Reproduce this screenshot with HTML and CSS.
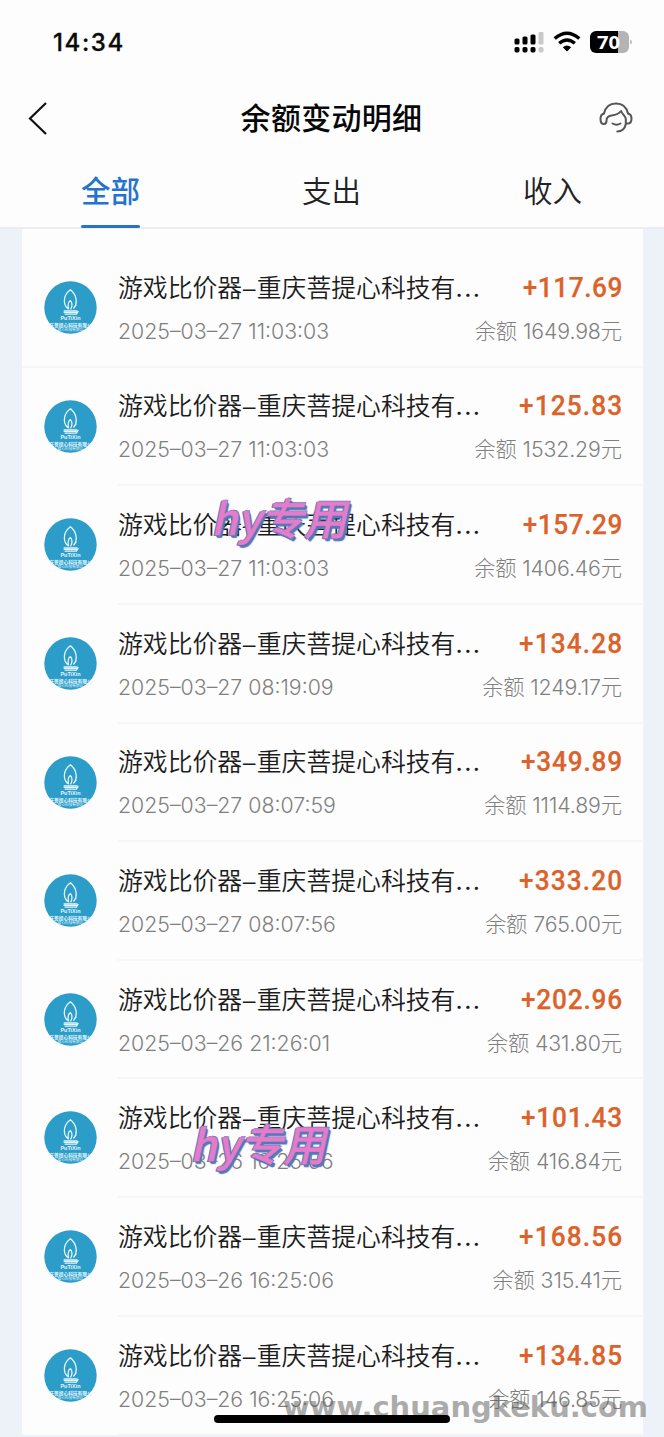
FILE: index.html
```html
<!DOCTYPE html>
<html lang="zh-CN">
<head>
<meta charset="utf-8">
<title>余额变动明细</title>
<link rel="stylesheet" href="styles.css">
</head>
<body>
<svg class="defs" width="0" height="0">
  <symbol id="avatar" viewBox="0 0 54 54">
    <circle cx="27" cy="27" r="26.7" fill="#2c9cc9"/>
    <g fill="none" stroke="#e6f7fc" stroke-width="1.3">
      <path d="M24 28C18 22 21 13 27 9c6 5 8 13 3 19M25 29c-1-5 0-8 2-9 2 2 2 6 0 9M30 28l3-4"/>
      <path d="M20 30.500h14M20 32h14M21 33.700h12l2-3"/>
    </g>
    <text x="27" y="40" text-anchor="middle" class="logo-name">PuTiXin</text>
    <text x="27" y="46.600" text-anchor="middle" class="logo-cn">庆菩提心科技有限公</text>
    <text x="27" y="50.700" text-anchor="middle" class="logo-sub">提心科技有限公</text>
  </symbol>
</svg>
<div class="screen">
  <header class="status">
    <span class="time">14:34</span>
    <svg class="status-icons" width="120" height="24" viewBox="0 0 120 24">
      <g fill="#000">
        <rect x="2.500" y="8.500" width="5" height="6" rx="1.500"/><rect x="10.500" y="6.500" width="5" height="8" rx="1.500"/><rect x="18.500" y="4.500" width="5" height="10" rx="1.500"/>
        <rect x="2.500" y="17" width="5" height="5.500" rx="1.700"/><rect x="10.500" y="17" width="5" height="5.500" rx="1.700"/><rect x="18.500" y="17" width="5" height="5.500" rx="1.700"/>
      </g>
      <g fill="#c9c9c9"><rect x="26.500" y="2" width="5" height="12.500" rx="1"/><rect x="26.500" y="17" width="5" height="5.500" rx="1.700"/></g>
      <g fill="none" stroke="#000" stroke-width="3.400"><path d="M42.700 8.500Q55 -2 67.300 8.500"/><path d="M47.200 13.300Q55 6.500 62.800 13.300"/></g>
      <path d="M50.800 17.200Q55 13.600 59.200 17.200L55 21.500Z"/>
      <path d="M84 1h22v22H84a6 6 0 0 1-6-6V7a6 6 0 0 1 6-6Z"/>
      <path d="M106 1h5a6 6 0 0 1 6 6v10a6 6 0 0 1-6 6h-5Z" fill="#b4b4b4"/>
      <path d="M118.300 9.500q1.500.5 1.500 2.500t-1.500 2.500Z" fill="#aaa"/>
      <text x="96.500" y="18.500" text-anchor="middle" class="battery" textLength="23" lengthAdjust="spacingAndGlyphs">70</text>
    </svg>
  </header>
  <nav class="navbar">
    <svg class="back" width="36" height="36" viewBox="0 0 36 36"><path d="M20 3 4 18.500 20 34" fill="none" stroke="#111" stroke-width="2.200"/></svg>
    <h1>余额变动明细</h1>
    <svg class="service" width="36" height="34" viewBox="0 0 36 34" fill="none" stroke="#555" stroke-width="2" stroke-linecap="round" stroke-linejoin="round">
      <path d="M6 12.500C7.500 6 12 2.500 18 2.500S28.500 6 30 12.500"/>
      <path d="M6 12.500C3.500 13 2.500 15 2.500 18c0 3 1 5 3.300 5S8.500 21.500 8.500 19.500c0-3 2-4.500 5-5 4-.5 7-1 9.500-4.500 1 3 4 4.500 4.800 7.500V23c-1 5-4 7.500-8.500 7.500"/>
      <path d="M30 12.500c2.500.5 3.500 2.500 3.500 5s-1 5-3.500 5H28M14.500 22.500q4 2.500 8 0"/>
    </svg>
  </nav>
  <div class="tabs"><span class="tab active">全部</span><span class="tab">支出</span><span class="tab">收入</span></div>
  <main class="list">
    <article class="row"><svg class="avatar"><use href="#avatar"/></svg><div class="body"><div class="line"><span class="title">游戏比价器<i>–</i>重庆菩提心科技有<b>...</b></span><span class="amount narrow"><i>+</i>117.69</span></div><div class="line sub"><time>2025–03–27 11:03:03</time><span class="balance">余额 1649.98元</span></div></div></article>
    <article class="row"><svg class="avatar"><use href="#avatar"/></svg><div class="body"><div class="line"><span class="title">游戏比价器<i>–</i>重庆菩提心科技有<b>...</b></span><span class="amount"><i>+</i>125.83</span></div><div class="line sub"><time>2025–03–27 11:03:03</time><span class="balance">余额 1532.29元</span></div></div></article>
    <article class="row"><svg class="avatar"><use href="#avatar"/></svg><div class="body"><div class="line"><span class="title">游戏比价器<i>–</i>重庆菩提心科技有<b>...</b></span><span class="amount narrow"><i>+</i>157.29</span></div><div class="line sub"><time>2025–03–27 11:03:03</time><span class="balance">余额 1406.46元</span></div></div></article>
    <article class="row"><svg class="avatar"><use href="#avatar"/></svg><div class="body"><div class="line"><span class="title">游戏比价器<i>–</i>重庆菩提心科技有<b>...</b></span><span class="amount"><i>+</i>134.28</span></div><div class="line sub"><time>2025–03–27 08:19:09</time><span class="balance">余额 1249.17元</span></div></div></article>
    <article class="row"><svg class="avatar"><use href="#avatar"/></svg><div class="body"><div class="line"><span class="title">游戏比价器<i>–</i>重庆菩提心科技有<b>...</b></span><span class="amount medium"><i>+</i>349.89</span></div><div class="line sub"><time>2025–03–27 08:07:59</time><span class="balance">余额 1114.89元</span></div></div></article>
    <article class="row"><svg class="avatar"><use href="#avatar"/></svg><div class="body"><div class="line"><span class="title">游戏比价器<i>–</i>重庆菩提心科技有<b>...</b></span><span class="amount"><i>+</i>333.20</span></div><div class="line sub"><time>2025–03–27 08:07:56</time><span class="balance">余额 765.00元</span></div></div></article>
    <article class="row"><svg class="avatar"><use href="#avatar"/></svg><div class="body"><div class="line"><span class="title">游戏比价器<i>–</i>重庆菩提心科技有<b>...</b></span><span class="amount medium"><i>+</i>202.96</span></div><div class="line sub"><time>2025–03–26 21:26:01</time><span class="balance">余额 431.80元</span></div></div></article>
    <article class="row"><svg class="avatar"><use href="#avatar"/></svg><div class="body"><div class="line"><span class="title">游戏比价器<i>–</i>重庆菩提心科技有<b>...</b></span><span class="amount medium"><i>+</i>101.43</span></div><div class="line sub"><time>2025–03–26 16:25:56</time><span class="balance">余额 416.84元</span></div></div></article>
    <article class="row"><svg class="avatar"><use href="#avatar"/></svg><div class="body"><div class="line"><span class="title">游戏比价器<i>–</i>重庆菩提心科技有<b>...</b></span><span class="amount"><i>+</i>168.56</span></div><div class="line sub"><time>2025–03–26 16:25:06</time><span class="balance">余额 315.41元</span></div></div></article>
    <article class="row"><svg class="avatar"><use href="#avatar"/></svg><div class="body"><div class="line"><span class="title">游戏比价器<i>–</i>重庆菩提心科技有<b>...</b></span><span class="amount"><i>+</i>134.85</span></div><div class="line sub"><time>2025–03–26 16:25:06</time><span class="balance">余额 146.85元</span></div></div></article>
  </main>
  <span class="stamp stamp-a">hy专用</span>
  <span class="stamp stamp-b">hy专用</span>
  <svg class="site" width="380" height="50"><text x="8" y="32" textLength="365" lengthAdjust="spacingAndGlyphs">www.chuangkeku.com</text></svg>
  <div class="home"></div>
</div>
</body>
</html>
```
FILE: styles.css
```css
* { box-sizing: border-box; }
body { margin: 0; font-family: Inter, "Noto Sans CJK SC", sans-serif; }
.defs { position: absolute; }
.screen { position: relative; width: 664px; height: 1437px; overflow: hidden; background: #edf2f8; display: flex; flex-direction: column; }
.status { height: 80px; flex: none; background: #fdfdfd; padding: 30px 32px 0 53px; display: flex; justify-content: space-between; align-items: flex-start; }
.time { font-size: 24px; line-height: 25px; font-weight: 500; letter-spacing: 1.600px; color: #0a0a0a; -webkit-text-stroke: .3px #0a0a0a; }
.battery { font: 700 18px "Open Sans", sans-serif; fill: #fff; }
.navbar { height: 76px; flex: none; background: #fdfdfd; padding: 0 30px 0 26px; display: flex; justify-content: space-between; align-items: center; }
.navbar h1 { margin: 0; padding: 0 0 4px 3px; font: 500 30px/40px "Noto Sans CJK SC", sans-serif; letter-spacing: .3px; color: #080808; }
.tabs { height: 73px; flex: none; background: #fdfdfd; display: grid; grid-template-columns: repeat(3, 221px); border-bottom: 2px solid #ededf1; }
.tab { justify-self: center; position: relative; height: 73px; font: 350 29.500px/66px "Noto Sans CJK SC", sans-serif; color: #222; }
.tab.active { color: #2573cb; font-weight: 500; }
.tab.active::after { content: ""; position: absolute; left: 0; right: 0; bottom: 1px; height: 3.500px; border-radius: 2px; background: #2573cb; }
.list { width: 621px; flex: none; margin-left: 22px; background: #fdfdfd; padding-top: 20px; }
.row { display: flex; height: 118.650px; padding: 0 21px 0 22px; }
.row:first-child { background: linear-gradient(#f7f7f9, #f7f7f9) left bottom / 100% 2px no-repeat; }
.avatar { width: 53px; height: 53px; flex: none; margin: 32px 21px 0 0; }
.body { flex: 1; padding-top: 19.300px; border-bottom: 2px solid #f7f7f9; margin-right: -20px; padding-right: 20px; }
.line { display: flex; justify-content: space-between; align-items: center; height: 38px; }
.title { font: 350 24.850px/38px "Noto Sans CJK SC", sans-serif; color: #1c1c1c; white-space: nowrap; margin-top: -3px; }
.title i { display: inline-block; width: 14.500px; text-align: center; font-style: normal; transform: scaleX(1.150); }
.title b { font: 400 25px Inter, sans-serif; letter-spacing: 1.500px; }
.amount { font: 500 28.500px/38px Roboto, sans-serif; color: #dc622a; letter-spacing: 1.200px; margin: 1px -1px 0 0; transform: scaleX(.92); transform-origin: right; -webkit-text-stroke: .25px #dc622a; }
.amount.medium { letter-spacing: .900px; }
.amount.narrow { letter-spacing: .600px; }
.amount i { font-style: normal; -webkit-text-stroke: 0; }
.sub { height: 30px; margin-top: 9px; font-size: 21.300px; font-weight: 300; color: #808080; white-space: pre; }
.sub time { margin-top: 1px; }
.balance { letter-spacing: -.1px; margin-top: -2px; }
.logo-name { font: 700 5.500px "Liberation Sans", sans-serif; fill: #e6f7fc; }
.logo-cn { font: 700 4.800px "Noto Sans CJK SC", sans-serif; fill: #e6f7fc; }
.logo-sub { font: 500 3.700px "Noto Sans CJK SC", sans-serif; fill: #cdebf5; }
.stamp { position: absolute; font: 500 43px/50px "Noto Sans CJK SC", sans-serif; color: #e57bcb; -webkit-text-stroke: .3px #e57bcb; transform: skewX(-12deg); text-shadow: 2px 2px 0 #5578b8, 3px 3px 1px #5578b8, 1px -1px 0 #747bb8, -1px 0 0 #747bb8, -1px 1px 0 #747bb8; white-space: nowrap; }
.stamp-a { left: 215px; top: 491px; }
.stamp-b { left: 194px; top: 1117px; }
.site { position: absolute; left: 275px; top: 1385px; opacity: .5; }
.site text { font: 700 28px "DejaVu Sans", sans-serif; fill: #5c5c5c; }
.home { position: absolute; left: 214px; top: 1415px; width: 236px; height: 8px; border-radius: 4px; background: #000; }
```
